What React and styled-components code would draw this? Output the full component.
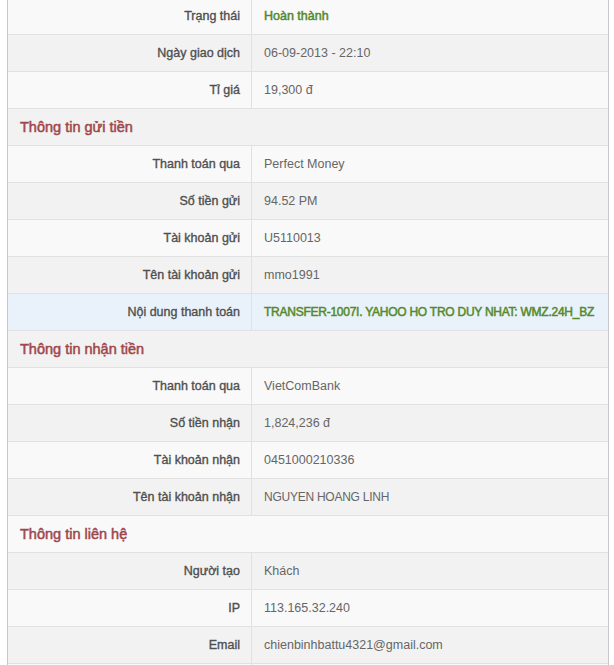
import React from 'react';
import styled, { createGlobalStyle } from 'styled-components';

const GlobalStyle = createGlobalStyle`
    html, body {
        margin: 0;
        padding: 0;
        background: #fff;
    }
    body {
        font-family: "Liberation Sans", Arial, sans-serif;
        font-size: 12.5px;
        color: #555;
    }
`

const Panel = styled.div`
    margin: -2px 0 0 7px;
    width: 600px;
    border-left: 1px solid #c9c9c9;
    border-right: 1px solid #c9c9c9;
`

const Row = styled.div`
    display: grid;
    grid-template-columns: 244px 1fr;
    height: 36px;
    border-bottom: 1px solid #e1e1e1;
    background: ${p => p.$highlight ? '#e9f2fa' : p.$dark ? '#f2f2f2' : '#f9f9f9'};
`

const Label = styled.div`
    display: flex;
    align-items: center;
    justify-content: flex-end;
    padding-right: 11px;
    border-right: 1px solid #e1e1e1;
    color: #4f4f4f;
    -webkit-text-stroke: 0.35px #4f4f4f;
`

const Value = styled.div`
    display: flex;
    align-items: center;
    padding-left: 12px;
    white-space: nowrap;
    color: #666;
    ${p => p.$accent && `
        color: #558a2a;
        -webkit-text-stroke: 0.5px #558a2a;
    `}
    ${p => p.$caps && `
        font-size: 12px;
        letter-spacing: -0.25px;
    `}
`

const SectionRow = styled.div`
    display: flex;
    align-items: center;
    height: 36px;
    padding-left: 12px;
    border-bottom: 1px solid #e1e1e1;
    background: ${p => p.$dark ? '#f2f2f2' : '#f9f9f9'};
    color: #a0464b;
    font-size: 14.5px;
    -webkit-text-stroke: 0.5px #a0464b;
`

const rows = [
    { label: 'Trạng thái', value: 'Hoàn thành', accent: true },
    { label: 'Ngày giao dịch', value: '06-09-2013 - 22:10' },
    { label: 'Tỉ giá', value: '19,300 đ' },
    { section: 'Thông tin gửi tiền' },
    { label: 'Thanh toán qua', value: 'Perfect Money' },
    { label: 'Số tiền gửi', value: '94.52 PM' },
    { label: 'Tài khoản gửi', value: 'U5110013' },
    { label: 'Tên tài khoản gửi', value: 'mmo1991' },
    { label: 'Nội dung thanh toán', value: 'TRANSFER-1007I. YAHOO HO TRO DUY NHAT: WMZ.24H_BZ', accent: true, caps: true, highlight: true },
    { section: 'Thông tin nhận tiền' },
    { label: 'Thanh toán qua', value: 'VietComBank' },
    { label: 'Số tiền nhận', value: '1,824,236 đ' },
    { label: 'Tài khoản nhận', value: '0451000210336' },
    { label: 'Tên tài khoản nhận', value: 'NGUYEN HOANG LINH', caps: true },
    { section: 'Thông tin liên hệ' },
    { label: 'Người tạo', value: 'Khách' },
    { label: 'IP', value: '113.165.32.240' },
    { label: 'Email', value: 'chienbinhbattu4321@gmail.com' },
    { label: '', value: '' },
];

const App = () => {
    return (
        <>
            <GlobalStyle />
            <Panel>
                {rows.map((r, i) => r.section ? (
                    <SectionRow key={i} $dark={i % 2 === 1}>{r.section}</SectionRow>
                ) : (
                    <Row key={i} $dark={i % 2 === 1} $highlight={r.highlight}>
                        <Label>{r.label}</Label>
                        <Value $accent={r.accent} $caps={r.caps}>{r.value}</Value>
                    </Row>
                ))}
            </Panel>
        </>
    )
}

export default App;
